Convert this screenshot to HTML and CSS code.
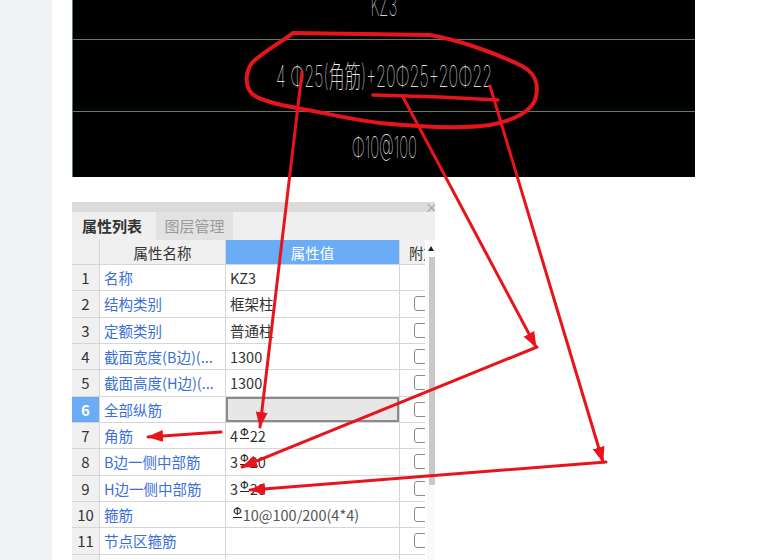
FILE: index.html
```html
<!DOCTYPE html>
<html lang="zh">
<head>
<meta charset="utf-8">
<title>属性列表</title>
<link rel="stylesheet" href="styles.css">
</head>
<body>
<div class="page">
  <div class="side"></div>
  <div class="main">
    <div class="cad">
      <div class="cad-row r1"><span class="cadtxt top">KZ3</span></div>
      <div class="cad-row r2"><span class="cadtxt mid">4 Φ25(角筋)+20Φ25+20Φ22</span></div>
      <div class="cad-row r3"><span class="cadtxt">Φ10@100</span></div>
    </div>
    <div class="panel">
      <div class="titlebar"><span class="close">×</span></div>
      <div class="tabs">
        <div class="tab active">属性列表</div>
        <div class="tab inactive">图层管理</div>
      </div>
      <div class="pbody">
        <div class="gridwrap">
          <div class="grid">
            <div class="c n h"></div><div class="c k h hk">属性名称</div><div class="c v h hv">属性值</div><div class="c x h hx">附加</div>

            <div class="c n">1</div><div class="c k">名称</div><div class="c v">KZ3</div><div class="c x"></div>
            <div class="c n">2</div><div class="c k">结构类别</div><div class="c v">框架柱</div><div class="c x"><span class="cb"></span></div>
            <div class="c n">3</div><div class="c k">定额类别</div><div class="c v">普通柱</div><div class="c x"><span class="cb"></span></div>
            <div class="c n">4</div><div class="c k">截面宽度(B边)(...</div><div class="c v">1300</div><div class="c x"><span class="cb"></span></div>
            <div class="c n">5</div><div class="c k">截面高度(H边)(...</div><div class="c v">1300</div><div class="c x"><span class="cb"></span></div>
            <div class="c n sel">6</div><div class="c k">全部纵筋</div><div class="c v edit"></div><div class="c x"><span class="cb"></span></div>
            <div class="c n">7</div><div class="c k">角筋</div><div class="c v">4<span class="rb">Φ</span>22</div><div class="c x"><span class="cb"></span></div>
            <div class="c n">8</div><div class="c k">B边一侧中部筋</div><div class="c v">3<span class="rb">Φ</span>20</div><div class="c x"><span class="cb"></span></div>
            <div class="c n">9</div><div class="c k">H边一侧中部筋</div><div class="c v">3<span class="rb">Φ</span>20</div><div class="c x"><span class="cb"></span></div>
            <div class="c n">10</div><div class="c k">箍筋</div><div class="c v gray"><span class="rb first">Φ</span>10@100/200(4*4)</div><div class="c x"><span class="cb"></span></div>
            <div class="c n">11</div><div class="c k">节点区箍筋</div><div class="c v"></div><div class="c x"><span class="cb"></span></div>
            <div class="c n"></div><div class="c k"></div><div class="c v"></div><div class="c x"></div>
          </div>
        </div>
        <div class="scroll">
          <div class="sarrow"></div>
          <div class="thumb"></div>
        </div>
      </div>
    </div>
  </div>
  <svg class="overlay" width="765" height="560" viewBox="0 0 765 560">
    <defs>
      <marker id="ah" markerUnits="userSpaceOnUse" markerWidth="16" markerHeight="12" refX="15" refY="6" orient="auto">
        <path d="M0,0 L16,6 L0,12 Z" fill="#e8141c"/>
      </marker>
    </defs>
    <g fill="none" stroke="#e8141c" stroke-linecap="round" stroke-linejoin="round">
      <path stroke-width="4" d="M293,33 C285,40 262,52 252,63 C244,74 245,90 255,96 C265,102 280,105 297,108 C330,114 355,120 380,123 C420,127 460,129 490,125 C515,120 530,112 535,100 C540,85 535,73 522,66 C500,55 460,40 430,35 L293,33"/>
      <path stroke-width="3.5" d="M373,95 L440,97 L498,100"/>
      <line stroke-width="3" x1="302" y1="72" x2="260" y2="427" marker-end="url(#ah)"/>
      <line stroke-width="3" x1="221" y1="432" x2="148" y2="437" marker-end="url(#ah)"/>
      <line stroke-width="3" x1="403" y1="97" x2="536" y2="347" marker-end="url(#ah)"/>
      <line stroke-width="3" x1="537" y1="347" x2="242" y2="467" marker-end="url(#ah)"/>
      <line stroke-width="3" x1="490" y1="86" x2="603" y2="462" marker-end="url(#ah)"/>
      <line stroke-width="3" x1="606" y1="462" x2="250" y2="490" marker-end="url(#ah)"/>
    </g>
  </svg>
</div>
</body>
</html>
```

FILE: styles.css
```css
* { box-sizing: border-box; }
html, body {
  margin: 0;
  width: 765px;
  height: 560px;
  overflow: hidden;
  background: #fff;
  font-family: "Noto Sans CJK SC", "Noto Sans", sans-serif;
}
.page {
  position: relative;
  display: flex;
  height: 560px;
}
.side {
  width: 52px;
  flex: none;
  background: #f1f2f4;
}
.main {
  padding-left: 20px;
  display: flex;
  flex-direction: column;
}
.cad {
  width: 623px;
  height: 177px;
  background: #000;
  border-left: 1px solid #5e7d6e;
  display: flex;
  flex-direction: column;
}
.cad-row {
  display: flex;
  justify-content: center;
  align-items: center;
  overflow: hidden;
  border-bottom: 1px solid #5e7d6e;
}
.r1 { height: 40px; align-items: flex-start; }
.r2 { height: 72px; }
.r3 { flex: 1; border-bottom: none; padding-top: 5px; }
.cadtxt {
  display: inline-block;
  color: #fff;
  font-family: Inter, "Noto Sans CJK SC", sans-serif;
  font-weight: 100;
  font-size: 30px;
  line-height: 30px;
  white-space: nowrap;
  transform: scaleX(0.5);
}
.cadtxt.mid { transform: scaleX(0.54); }
.cadtxt.top { margin-top: -10px; }

.panel {
  margin-top: 25px;
  width: 363px;
  flex: 1;
  display: flex;
  flex-direction: column;
  min-height: 0;
}
.titlebar {
  height: 10px;
  background: #dbdbdb;
  display: flex;
  justify-content: flex-end;
  overflow: hidden;
}
.close {
  font-size: 13px;
  line-height: 10px;
  color: #9a9a9a;
  margin-right: -3px;
}
.tabs {
  height: 28px;
  background: #efefef;
  display: flex;
}
.tab {
  font-size: 15px;
  line-height: 28px;
  white-space: nowrap;
}
.tab.active {
  width: 81px;
  padding-left: 10px;
  font-weight: bold;
  color: #333;
}
.tab.inactive {
  width: 77px;
  margin-left: 3px;
  text-align: center;
  color: #9b9b9b;
  background: #e2e2e2;
}
.pbody {
  flex: 1;
  display: flex;
  min-height: 0;
}
.gridwrap {
  width: 353px;
  overflow: hidden;
}
.grid {
  display: grid;
  grid-template-columns: 28px 126px 174px 40px;
  grid-template-rows: 25px;
  grid-auto-rows: 26.33px;
  width: 368px;
}
.c {
  border-right: 1px solid #d6d6d6;
  border-bottom: 1px solid #d6d6d6;
  font-size: 14.5px;
  white-space: nowrap;
  overflow: hidden;
  display: flex;
  align-items: center;
}
.n {
  background: #f0f0f0;
  justify-content: center;
  color: #333;
  font-size: 15px;
}
.n.sel {
  background: #6aacf5;
  color: #fff;
  font-weight: bold;
}
.k {
  color: #3a6fd8;
  padding-left: 4px;
}
.v {
  color: #333;
  padding-left: 4px;
}
.v.gray { color: #555; padding-left: 7px; }
.v.edit {
  background: #e7e7e7;
  box-shadow: inset 0 0 0 2px #8a8a8a;
}
.x {
  padding-left: 14px;
  color: #333;
}
.h { background: #f0f0f0; }
.hk { justify-content: center; color: #333; padding-left: 0; }
.hv {
  background: #6aacf5;
  color: #fff;
  justify-content: center;
  padding-left: 0;
}
.hx { padding-left: 9px; }
.cb {
  width: 15px;
  height: 15px;
  border: 1.5px solid #8a8a8a;
  border-radius: 3px;
  background: #fff;
  flex: none;
}
.rb {
  display: inline-block;
  font-family: "DejaVu Sans", sans-serif;
  font-size: 11px;
  line-height: 10px;
  color: #222;
  border-bottom: 1.5px solid #222;
  margin: 0 1px 0 2px;
  transform: translateY(-2px);
}
.rb.first { margin-left: 0; }
.scroll {
  width: 8px;
  margin-left: 2px;
  display: flex;
  flex-direction: column;
  background: #fafafa;
}
.sarrow {
  height: 17px;
  display: flex;
  justify-content: center;
  align-items: center;
}
.sarrow::before {
  content: "";
  width: 0;
  height: 0;
  border-left: 3px solid transparent;
  border-right: 3px solid transparent;
  border-bottom: 5px solid #222;
}
.thumb {
  height: 228px;
  width: 6px;
  margin-left: 2px;
  background: #c8c8c8;
}
.overlay {
  position: absolute;
  left: 0;
  top: 0;
  pointer-events: none;
}
```
